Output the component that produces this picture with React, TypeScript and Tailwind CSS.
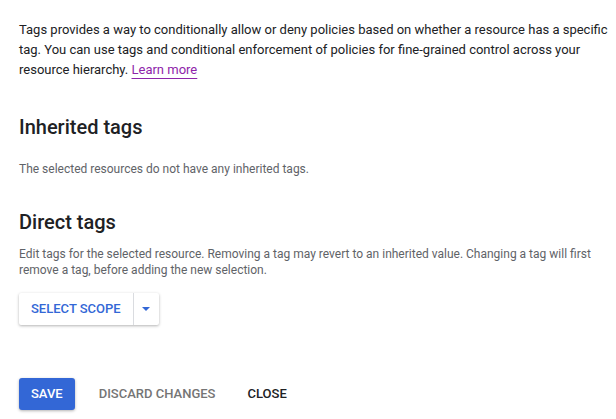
export default function App() {
  return (
    <div className="w-[616px] h-[419px] bg-white pl-[19px] pr-[6px] pt-[20px] font-['Roboto',sans-serif] text-[#202124]">
      <p className="text-[13px] leading-[20px]">
        Tags provides a way to conditionally allow or deny policies based on whether a resource has a specific tag. You can use tags and conditional enforcement of policies for fine-grained control across your resource hierarchy.{" "}
        <a href="#" className="text-[#8e24aa] underline underline-offset-[4px]">Learn more</a>
      </p>

      <h2 className="mt-[33px] text-[20px] leading-[28px] font-medium">Inherited tags</h2>
      <p className="mt-[20px] text-[12px] leading-[16px] text-[#5f6368]">
        The selected resources do not have any inherited tags.
      </p>

      <h2 className="mt-[31px] text-[20px] leading-[28px] font-medium">Direct tags</h2>
      <p className="mt-[10px] text-[12px] leading-[16px] text-[#5f6368]">
        Edit tags for the selected resource. Removing a tag may revert to an inherited value. Changing a tag will first remove a tag, before adding the new selection.
      </p>

      <div className="mt-[15px] inline-flex h-[32px] rounded-[2px] bg-white shadow-[0_1px_3px_rgba(0,0,0,0.3)]">
        <button className="px-[12px] text-[13px] font-medium text-[#3367d6]">SELECT SCOPE</button>
        <button className="w-[26px] flex items-center justify-center border-l border-[#dadce0]">
          <span className="block w-0 h-0 border-l-[4px] border-r-[4px] border-t-[4px] border-l-transparent border-r-transparent border-t-[#3367d6]"></span>
        </button>
      </div>

      <div className="mt-[53px] flex items-center">
        <button className="h-[32px] px-[12px] rounded-[3px] bg-[#3367d6] text-white text-[13px] font-medium shadow-[0_1px_3px_rgba(0,0,0,0.3)]">SAVE</button>
        <button className="ml-[24px] text-[13px] font-medium text-[#757575]">DISCARD CHANGES</button>
        <button className="ml-[32px] text-[13px] font-medium text-[#202124]">CLOSE</button>
      </div>
    </div>
  );
}
